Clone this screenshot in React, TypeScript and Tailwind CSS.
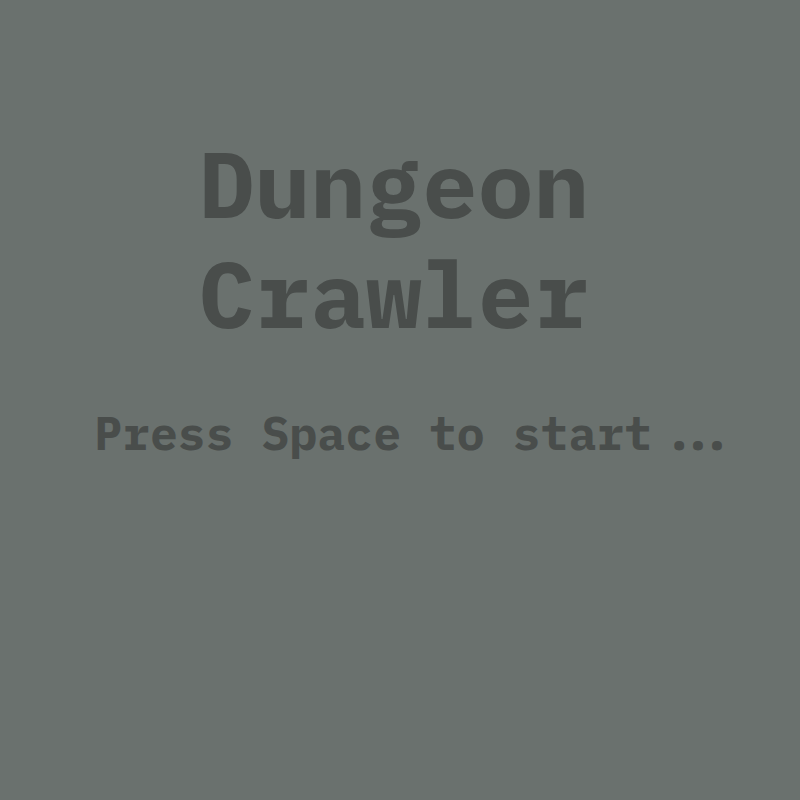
export default function App() {
  return (
    <div className="w-[800px] h-[800px] bg-[#6a716e] flex flex-col items-center pt-[129px] text-[#494d4b] font-bold font-['IBM_Plex_Mono','DejaVu_Sans_Mono',monospace]">
      <h1 className="w-full text-center text-[93px] leading-[110px] -ml-[12px]">Dungeon Crawler</h1>
      <p className="mt-[61px] text-[46.5px] leading-none ml-[16px] whitespace-nowrap">
        Press Space to start
        <span className="ml-[13px] tracking-[-9px]">...</span>
      </p>
    </div>
  );
}
